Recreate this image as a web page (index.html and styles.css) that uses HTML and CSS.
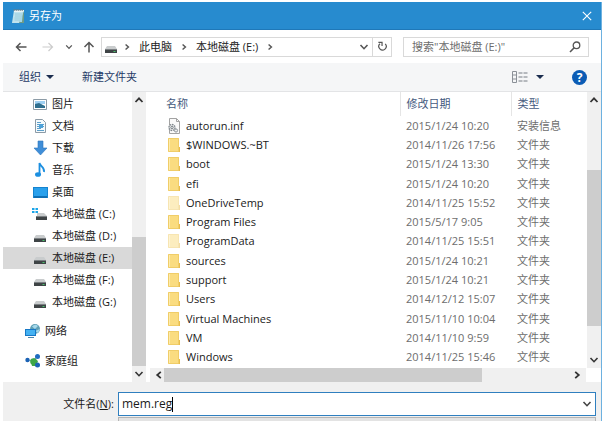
FILE: index.html
```html
<!DOCTYPE html>
<html lang="zh-CN">
<head>
    <meta charset="UTF-8">
    <meta name="viewport" content="width=device-width, initial-scale=1.0">
    <title>另存为</title>
    <link rel="stylesheet" href="styles.css">
</head>
<body>
    <!-- 图标定义 -->
    <svg class="sprite" aria-hidden="true">
        <symbol id="chev-down" viewBox="0 0 10 10"><path d="M1.500 3l3.500 3.700L8.500 3" fill="none" stroke="currentColor" stroke-width="1.600"/></symbol>
        <symbol id="chev-up" viewBox="0 0 10 10"><path d="M1.500 7L5 3.300 8.500 7" fill="none" stroke="currentColor" stroke-width="1.800"/></symbol>
        <symbol id="chev-left" viewBox="0 0 10 10"><path d="M6.800 1.800L3.200 5l3.600 3.200" fill="none" stroke="currentColor" stroke-width="1.800"/></symbol>
        <symbol id="chev-right" viewBox="0 0 10 10"><path d="M3.200 1.800L6.800 5 3.200 8.200" fill="none" stroke="currentColor" stroke-width="1.800"/></symbol>
        <symbol id="drive" viewBox="0 0 16 16">
            <path d="M4 7h8l2 3H2z" fill="#c9cccd"/>
            <path d="M2 10h12v4H2z" fill="#3f4446"/>
            <path d="M2 10h12v1H2z" fill="#7b8083"/>
            <path d="M10.500 12h2v1h-2z" fill="#49c26b"/>
        </symbol>
        <symbol id="folder" viewBox="0 0 14 16">
            <path d="M1 1h11v14H1z" fill="#fadc80"/>
            <path d="M1 1h2v14H1z" fill="#fdebac"/>
            <path d="M11 10h2v5h-2z" fill="#e9bd4d"/>
            <path d="M1.500 1.500h10v13h-10z" fill="none" stroke="#f0cd68"/>
        </symbol>
    </svg>

    <div class="dialog">
        <header class="titlebar">
            <svg class="icon" viewBox="0 0 16 16">
                <path d="M4 2h10l-1 13H2z" fill="#bfe3ee"/>
                <path d="M4 2h10v2H4z" fill="#e9f3f5"/>
                <path d="M4.200 1v2M6.200 1v2M8.200 1v2M10.200 1v2M12.200 1v2" stroke="#6b7f89"/>
                <path d="M5 6h7M5 8h7M4.500 10h7M4.500 12h7" stroke="#8fc6d8" stroke-width=".8"/>
                <path d="M14 3v12H9z" fill="#6f9b86"/>
                <path d="M13 3l-1 11H9z" fill="#a6d7e6"/>
            </svg>
            <h1 class="title">另存为</h1>
            <button class="close" type="button" aria-label="关闭">
                <svg viewBox="0 0 10 10"><path d="M.8.8l8.400 8.400M9.200.8L.8 9.200" stroke="#fff" stroke-width="1.100"/></svg>
            </button>
        </header>

        <nav class="navbar">
            <button class="nav-btn" type="button" aria-label="后退"><svg viewBox="0 0 12 12"><path d="M11.500 6H1.500M5.500 2L1.500 6l4 4" fill="none" stroke="currentColor" stroke-width="1.500"/></svg></button>
            <button class="nav-btn nav-forward" type="button" aria-label="前进" disabled><svg viewBox="0 0 12 12"><path d="M.5 6h10M6.500 2l4 4-4 4" fill="none" stroke="currentColor" stroke-width="1.200"/></svg></button>
            <button class="nav-btn nav-recent" type="button" aria-label="最近位置"><svg viewBox="0 0 10 10"><use href="#chev-down"/></svg></button>
            <button class="nav-btn nav-up" type="button" aria-label="向上"><svg viewBox="0 0 12 12"><path d="M6 11.500V1.500M1.500 6L6 1.500 10.500 6" fill="none" stroke="currentColor" stroke-width="1.500"/></svg></button>
            <div class="address">
                <svg class="icon address-icon"><use href="#drive"/></svg>
                <svg class="sep"><use href="#chev-right"/></svg>
                <a class="crumb" href="#">此电脑</a>
                <svg class="sep"><use href="#chev-right"/></svg>
                <a class="crumb" href="#">本地磁盘 (E:)</a>
                <svg class="sep"><use href="#chev-right"/></svg>
                <button class="address-drop" type="button" aria-label="展开"><svg viewBox="0 0 10 10"><use href="#chev-down"/></svg></button>
                <button class="refresh" type="button" aria-label="刷新">
                    <svg viewBox="0 0 12 12"><path d="M3.200 3A4 4 0 1 0 9 3.200" fill="none" stroke="currentColor" stroke-width="1.300"/><path d="M1.500 1.500h4v4" fill="none" stroke="currentColor" stroke-width="1.300"/></svg>
                </button>
            </div>
            <div class="search">
                <input class="search-input" type="text" aria-label="搜索" placeholder='搜索"本地磁盘 (E:)"'>
                <svg class="search-icon" viewBox="0 0 12 12"><circle cx="7.500" cy="4.300" r="3.300" fill="none" stroke="currentColor" stroke-width="1.300"/><path d="M5.200 6.800L1 11" stroke="currentColor" stroke-width="1.600"/></svg>
            </div>
        </nav>

        <div class="toolbar">
            <button class="tool" type="button">组织<span class="caret"></span></button>
            <button class="tool" type="button">新建文件夹</button>
            <button class="tool view" type="button" aria-label="更改视图">
                <svg viewBox="0 0 16 12">
                    <path d="M.5.500h4v11h-4zM.5 4h4M.5 8h4" fill="none" stroke="#8b9097"/>
                    <path d="M6.500 2h4M11.500 2H15.500M6.500 6h4M11.500 6H15.500M6.500 10h4M11.500 10H15.500" stroke="#777c84"/>
                </svg>
                <span class="caret"></span>
            </button>
            <button class="help" type="button" aria-label="帮助">?</button>
        </div>

        <main class="content">
            <aside class="sidebar">
                <ul class="tree">
                    <li class="node"><svg class="icon" viewBox="0 0 16 16"><path d="M1.500 3.500h13v10h-13z" fill="#fff" stroke="#8c9ba6"/><path d="M3 5h10v3H3z" fill="#9fd0f2"/><path d="M3 8l4-1 6 3v2H3z" fill="#2f6f8f"/></svg>图片</li>
                    <li class="node"><svg class="icon" viewBox="0 0 16 16"><path d="M3.500 1.500h7l3 3v10h-10z" fill="#f4fafd" stroke="#8c9ba6"/><path d="M5 4.500h4M5 6.500h7M5 8.500h7M5 10.500h4M5 12.500h7" stroke="#5d9fca"/><path d="M7 6h4v4H7z" fill="#4da2d9"/></svg>文档</li>
                    <li class="node"><svg class="icon" viewBox="0 0 16 16"><path d="M6 1h5v7h4l-6.500 7L2 8h4z" fill="#3f8ed8" stroke="#2c76bd" stroke-width=".6"/></svg>下载</li>
                    <li class="node"><svg class="icon" viewBox="0 0 16 16"><ellipse cx="6" cy="12.500" rx="3" ry="2.300" fill="#1c8fe0"/><path d="M7.500 12.500V1c.5 3.500 5.500 4 4.500 9" fill="none" stroke="#1c8fe0" stroke-width="1.800"/></svg>音乐</li>
                    <li class="node"><svg class="icon" viewBox="0 0 16 16"><path d="M1 3h15v11H1z" fill="#1583cf"/><path d="M2 4h13v8H2z" fill="#29a0ec"/><path d="M2 13h13" stroke="#0b5b98"/></svg>桌面</li>
                    <li class="node"><svg class="icon" viewBox="0 0 16 16"><path d="M5 7h7l3 3H5z" fill="#c9cccd"/><path d="M4 10h11v4H4z" fill="#3f4446"/><path d="M4 10h11v1H4z" fill="#7b8083"/><path d="M0 2h2.500v2H0zM3.500 2H6v2H3.500zM0 5h2.500v2H0zM3.500 5H6v2H3.500z" fill="#1ca5e8"/></svg>本地磁盘 (C:)</li>
                    <li class="node"><svg class="icon"><use href="#drive"/></svg>本地磁盘 (D:)</li>
                    <li class="node selected"><svg class="icon"><use href="#drive"/></svg>本地磁盘 (E:)</li>
                    <li class="node"><svg class="icon"><use href="#drive"/></svg>本地磁盘 (F:)</li>
                    <li class="node"><svg class="icon"><use href="#drive"/></svg>本地磁盘 (G:)</li>
                    <li class="node root"><svg class="icon" viewBox="0 0 16 16"><circle cx="10" cy="6" r="5" fill="#5f9fb5"/><path d="M7 3.500q3-3 6-.5l-3 3zM10 8l5-2-2 4z" fill="#a5d8ea"/><path d="M0 6h11v7H0z" fill="#1778c6"/><path d="M1 7h9v5H1z" fill="#43b1f2"/><path d="M3 14.500h6" stroke="#4b86ad"/></svg>网络</li>
                    <li class="node root"><svg class="icon" viewBox="0 0 16 16"><path d="M2 7l7 1 3-5M9 8l3 4" fill="none" stroke="#7fb4c4"/><circle cx="2.500" cy="7" r="2.200" fill="#1b62b5"/><path d="M6 9l3-4 4 3-2 5H7z" fill="#3fa648"/><circle cx="8.500" cy="8.500" r="3.300" fill="#3fa648"/><circle cx="12.500" cy="3.500" r="2.500" fill="#1f6cc0"/><circle cx="12.500" cy="12" r="2.500" fill="#1b62b5"/></svg>家庭组</li>
                </ul>
                <div class="scrollbar">
                    <svg class="arrow"><use href="#chev-up"/></svg>
                    <div class="track"><div class="thumb tree-thumb"></div></div>
                    <svg class="arrow"><use href="#chev-down"/></svg>
                </div>
            </aside>

            <section class="files">
                <div class="list">
                    <table class="table">
                        <thead>
                            <tr><th class="col-name">名称</th><th class="col-date">修改日期</th><th>类型</th></tr>
                        </thead>
                        <tbody>
                            <tr><td><span class="file"><svg class="file-icon" viewBox="0 0 14 16"><path d="M2.500.5h7l3 3v12h-10z" fill="#fafafa" stroke="#a3a3a3"/><path d="M9.500.5v3h3" fill="none" stroke="#a3a3a3"/><circle cx="5" cy="9.500" r="3" fill="#eee" stroke="#7d858b" stroke-width="1.400" stroke-dasharray="1.500 .8"/><circle cx="5" cy="9.500" r="1.200" fill="none" stroke="#7d858b"/><circle cx="9" cy="12.500" r="1.600" fill="#eee" stroke="#8b9399"/></svg>autorun.inf</span></td><td>2015/1/24 10:20</td><td>安装信息</td></tr>
                            <tr><td><span class="file"><svg class="file-icon"><use href="#folder"/></svg>$WINDOWS.~BT</span></td><td>2014/11/26 17:56</td><td>文件夹</td></tr>
                            <tr><td><span class="file"><svg class="file-icon"><use href="#folder"/></svg>boot</span></td><td>2015/1/24 13:30</td><td>文件夹</td></tr>
                            <tr><td><span class="file"><svg class="file-icon"><use href="#folder"/></svg>efi</span></td><td>2015/1/24 10:20</td><td>文件夹</td></tr>
                            <tr><td><span class="file hidden-file"><svg class="file-icon"><use href="#folder"/></svg>OneDriveTemp</span></td><td>2014/11/25 15:52</td><td>文件夹</td></tr>
                            <tr><td><span class="file"><svg class="file-icon"><use href="#folder"/></svg>Program Files</span></td><td>2015/5/17 9:05</td><td>文件夹</td></tr>
                            <tr><td><span class="file hidden-file"><svg class="file-icon"><use href="#folder"/></svg>ProgramData</span></td><td>2014/11/25 15:51</td><td>文件夹</td></tr>
                            <tr><td><span class="file"><svg class="file-icon"><use href="#folder"/></svg>sources</span></td><td>2015/1/24 10:21</td><td>文件夹</td></tr>
                            <tr><td><span class="file"><svg class="file-icon"><use href="#folder"/></svg>support</span></td><td>2015/1/24 10:21</td><td>文件夹</td></tr>
                            <tr><td><span class="file"><svg class="file-icon"><use href="#folder"/></svg>Users</span></td><td>2014/12/12 15:07</td><td>文件夹</td></tr>
                            <tr><td><span class="file"><svg class="file-icon"><use href="#folder"/></svg>Virtual Machines</span></td><td>2015/11/10 10:04</td><td>文件夹</td></tr>
                            <tr><td><span class="file"><svg class="file-icon"><use href="#folder"/></svg>VM</span></td><td>2014/11/10 9:59</td><td>文件夹</td></tr>
                            <tr><td><span class="file"><svg class="file-icon"><use href="#folder"/></svg>Windows</span></td><td>2014/11/25 15:46</td><td>文件夹</td></tr>
                        </tbody>
                    </table>
                    <div class="scrollbar">
                        <svg class="arrow"><use href="#chev-up"/></svg>
                        <div class="track"><div class="thumb list-thumb"></div></div>
                        <svg class="arrow"><use href="#chev-down"/></svg>
                    </div>
                </div>
                <div class="scrollbar horizontal">
                    <svg class="arrow"><use href="#chev-left"/></svg>
                    <div class="track"><div class="thumb wide-thumb"></div></div>
                    <svg class="arrow"><use href="#chev-right"/></svg>
                </div>
            </section>
        </main>

        <form class="fields">
            <label class="field-label" for="filename">文件名(<u>N</u>):</label>
            <div class="combo">
                <input class="combo-input" id="filename" type="text" value="mem.reg" size="7"><span class="text-caret"></span>
                <button class="combo-drop" type="button" aria-label="历史文件名"><svg viewBox="0 0 10 10"><use href="#chev-down"/></svg></button>
            </div>
            <select class="type-select" aria-label="保存类型"></select>
        </form>
    </div>
</body>
</html>
```
FILE: styles.css
```css
* {
    box-sizing: border-box;
}

body {
    margin: 0;
    height: 100vh;
    overflow: hidden;
    background: #fff;
    font: 11px/16px "Open Sans", "Noto Sans", "Noto Sans CJK SC", sans-serif;
    color: #1a1a1a;
}

button,
input,
select {
    font: inherit;
    color: inherit;
    margin: 0;
    padding: 0;
    border: 0;
    background: none;
}

.sprite {
    display: none;
}

.icon {
    flex: none;
    width: 16px;
    height: 16px;
}

.dialog {
    display: flex;
    flex-direction: column;
    margin: 2px 7px 0 3px;
    border-right: 1px solid #6db1e0;
}

/* 标题栏 */
.titlebar {
    display: flex;
    align-items: center;
    gap: 3px;
    height: 28px;
    padding: 0 9px 0 7px;
    background: #278bcf;
    border-bottom: 1px solid #1f78b8;
    color: #fff;
}

.title {
    margin: 0;
    font-size: 11px;
    font-weight: 400;
}

.close {
    display: flex;
    margin-left: auto;
}

.close svg {
    width: 10px;
    height: 10px;
}

/* 导航栏 */
.navbar {
    display: flex;
    align-items: center;
    height: 33px;
    padding: 0 12px;
    color: #555;
}

.nav-btn {
    display: flex;
}

.nav-btn svg {
    width: 12px;
    height: 12px;
}

.nav-forward {
    margin-left: 15px;
    color: #ccc;
}

.nav-recent {
    margin-left: 11px;
}

.nav-btn.nav-recent svg {
    width: 8px;
    height: 8px;
}

.nav-up {
    margin: 0 6px 0 10px;
}

.address {
    flex: 1;
    display: flex;
    align-items: center;
    height: 20px;
    border: 1px solid #d9d9d9;
    color: #222;
}

.address-icon {
    margin: 0 4px 0 1px;
}

.sep {
    width: 8px;
    height: 8px;
    color: #555;
}

.crumb {
    margin: 0 8px;
    color: inherit;
    text-decoration: none;
}

.address-drop {
    display: flex;
    margin-left: auto;
    margin-right: 3px;
    color: #555;
}

.address-drop svg {
    width: 10px;
    height: 10px;
}

.refresh {
    display: flex;
    align-items: center;
    justify-content: center;
    width: 19px;
    height: 18px;
    border-left: 1px solid #d9d9d9;
    color: #555;
}

.refresh svg {
    width: 11px;
    height: 11px;
}

.search {
    display: flex;
    align-items: center;
    width: 186px;
    height: 20px;
    margin-left: 11px;
    padding: 0 7px 0 8px;
    border: 1px solid #d9d9d9;
}

.search-input {
    flex: 1;
    min-width: 0;
    outline: 0;
}

.search-input::placeholder {
    color: #6d6d6d;
}

.search-icon {
    width: 12px;
    height: 12px;
}

/* 工具栏 */
.toolbar {
    display: flex;
    align-items: center;
    gap: 28px;
    height: 29px;
    padding: 0 14px 0 16px;
    background: #f5f6f7;
    border-bottom: 1px solid #e3e4e6;
    color: #1e3a66;
}

.tool {
    display: flex;
    align-items: center;
    gap: 5px;
}

.caret {
    border: 4px solid transparent;
    border-top-color: #1b2d4f;
    border-bottom: 0;
}

.view {
    gap: 8px;
    margin-left: auto;
}

.view svg {
    width: 16px;
    height: 12px;
}

.help {
    width: 15px;
    height: 15px;
    border-radius: 50%;
    background: #0b5cb5;
    color: #fff;
    font-size: 12px;
    font-weight: 700;
    line-height: 15px;
}

/* 目录树 */
.content {
    display: flex;
    height: 290px;
}

.sidebar {
    display: flex;
    width: 143px;
}

.tree {
    flex: 1;
    margin: 0;
    padding: 1px 0 0;
    list-style: none;
}

.node {
    display: flex;
    align-items: center;
    gap: 4px;
    height: 22px;
    padding-left: 29px;
    white-space: nowrap;
}

.node.root {
    height: 30px;
    padding-left: 22px;
}

.node:not(.root) + .root {
    margin-top: 3px;
}

.selected {
    background: #d9d9d9;
}

/* 滚动条 */
.scrollbar {
    flex: none;
    display: flex;
    flex-direction: column;
    align-items: center;
    width: 14px;
    background: #f0f0f0;
}

.arrow {
    flex: none;
    width: 10px;
    height: 16px;
    color: #333;
}

.track {
    flex: 1;
    width: 100%;
    display: flex;
    flex-direction: column;
}

.thumb {
    background: #cdcdcd;
}

.tree-thumb {
    height: 50%;
    margin-top: auto;
}

.list-thumb {
    height: 64%;
    margin-top: auto;
    margin-bottom: 26px;
}

.horizontal {
    flex-direction: row;
    width: auto;
    height: 14px;
    margin-right: 15px;
    padding: 0 4px;
}

.horizontal .arrow {
    width: 10px;
    height: 10px;
}

.horizontal .track {
    height: 100%;
}

.wide-thumb {
    width: 78%;
    height: 100%;
}

/* 文件列表 */
.files {
    flex: 1;
    display: flex;
    flex-direction: column;
    min-width: 0;
    padding-left: 4px;
}

.list {
    flex: 1;
    display: flex;
}

.table {
    flex: 1;
    height: 275px;
    border-collapse: collapse;
    table-layout: fixed;
    line-height: 14px;
    color: #6d6d6d;
    white-space: nowrap;
}

.table th {
    height: 24px;
    padding: 0 0 0 6px;
    border-left: 1px solid #e5e5e5;
    font-weight: 400;
    text-align: left;
    color: #44597d;
}

.table th:first-child {
    padding-left: 16px;
    border-left: 0;
}

.table td {
    padding: 0 0 0 6px;
}

.table td:first-child {
    padding-left: 17px;
    color: #1a1a1a;
}

.col-name {
    width: 250px;
}

.col-date {
    width: 111px;
}

.file {
    display: flex;
    align-items: center;
    gap: 5px;
}

.file-icon {
    width: 14px;
    height: 16px;
}

.hidden-file .file-icon {
    opacity: .5;
}

/* 文件名 */
.fields {
    display: grid;
    grid-template-columns: 111px 1fr;
    column-gap: 4px;
    row-gap: 1px;
    padding: 10px 5px 0 0;
    background: #f0f0f0;
}

.field-label {
    align-self: center;
    text-align: right;
}

.combo {
    display: flex;
    align-items: center;
    height: 24px;
    padding: 0 3px;
    background: #fff;
    border: 1px solid #2f7fbf;
}

.combo-input {
    field-sizing: content;
    outline: 0;
    font-size: 12px;
}

.text-caret {
    width: 1px;
    height: 15px;
    background: #000;
}

.combo-drop {
    display: flex;
    margin-left: auto;
    color: #444;
}

.combo-drop svg {
    width: 10px;
    height: 10px;
}

.type-select {
    grid-column: 2;
    height: 24px;
    appearance: none;
    background: #e3e3e3;
    border: 1px solid #b5b5b5;
}
```
